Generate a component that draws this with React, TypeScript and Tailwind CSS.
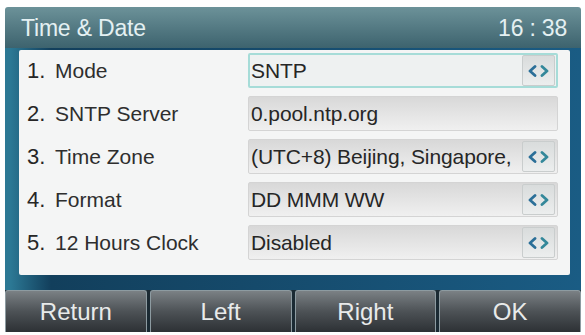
import React from "react";

const rows = [
  { n: "1.", label: "Mode", value: "SNTP", arrow: true, selected: true },
  { n: "2.", label: "SNTP Server", value: "0.pool.ntp.org", arrow: false },
  { n: "3.", label: "Time Zone", value: "(UTC+8) Beijing, Singapore,", arrow: true },
  { n: "4.", label: "Format", value: "DD MMM WW", arrow: true },
  { n: "5.", label: "12 Hours Clock", value: "Disabled", arrow: true },
];

function Arrows() {
  return (
    <svg width="24" height="12" viewBox="0 0 24 12" fill="none">
      <path d="M8 1.5 L3 6 L8 10.5" stroke="#2b6f98" strokeWidth="2.8" strokeLinecap="round" strokeLinejoin="round" />
      <path d="M15 1.5 L20 6 L15 10.5" stroke="#34889a" strokeWidth="2.8" strokeLinecap="round" strokeLinejoin="round" />
    </svg>
  );
}

export default function App() {
  return (
    <div
      className="w-[585px] h-[335px] bg-white pl-[5px] pt-[7px] overflow-hidden"
      style={{ fontFamily: '"Liberation Sans", Arial, sans-serif' }}
    >
      <div className="w-[576px] h-[325px] flex flex-col rounded-t-[3px] overflow-hidden">
        {/* title bar */}
        <div className="h-[41px] flex items-center justify-between pl-[16px] pr-[14px] bg-gradient-to-b from-[#6c9299] to-[#3d636e] text-[#e4f0f2] text-[23px] tracking-[-0.2px]">
          <span className="pt-[2px]">Time &amp; Date</span>
          <span className="pt-[2px]">16 : 38</span>
        </div>
        {/* body */}
        <div className="h-[242px] flex flex-col bg-gradient-to-r from-[#2c7894] from-[1%] via-[#123f5c] via-[8%] to-[#1a5c84]">
          <div className="mt-[2px] ml-[14px] mr-[11px] h-[225px] bg-[#f4f5f5] rounded-[2px] pt-[3px] pl-[8px] pr-[12px] flex flex-col gap-[8px]">
            {rows.map((r) => (
              <div key={r.n} className="h-[35px] flex items-center">
                <div className="w-[221px] flex items-center text-[#2e2e2e]">
                  <span className="w-[28px] text-[22px] text-[#262626]">{r.n}</span>
                  <span className="text-[21px]">{r.label}</span>
                </div>
                <div
                  className={
                    r.selected
                      ? "flex-1 h-full flex items-center justify-between bg-[#eef1f1] border-2 border-[#a6dcd8] rounded-[2px] pl-[1px] pr-[1px]"
                      : "flex-1 h-full flex items-center justify-between bg-gradient-to-b from-[#d8d8d8] to-[#f0f0f0] border border-[#d4d4d4] rounded-[2px] pl-[2px] pr-[2px]"
                  }
                >
                  <span className="text-[21px] text-[#262626] whitespace-nowrap tracking-[-0.1px]">{r.value}</span>
                  {r.arrow && (
                    <div className="w-[33px] h-[31px] flex items-center justify-center bg-gradient-to-b from-[#d9dcdc] to-[#eceeee] border border-[#c9cdcd] rounded-[2px]">
                      <Arrows />
                    </div>
                  )}
                </div>
              </div>
            ))}
          </div>
        </div>
        {/* soft keys */}
        <div className="h-[42px] flex gap-[3px] bg-[#1b2a33]">
          {["Return", "Left", "Right", "OK"].map((b) => (
            <div
              key={b}
              className="flex-1 flex items-center justify-center rounded-t-[3px] border-t border-x border-[#8d9ba1] bg-gradient-to-b from-[#7b8185] via-[#4d5256] to-[#2d3135] text-[#e8eaea] text-[24px]"
            >
              {b}
            </div>
          ))}
        </div>
      </div>
    </div>
  );
}
